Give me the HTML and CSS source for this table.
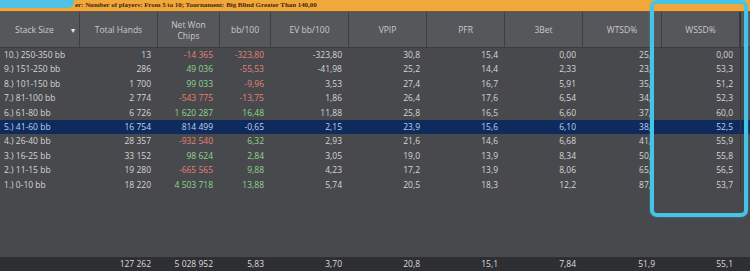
FILE: index.html
```html
<!DOCTYPE html>
<html>
<head>
<meta charset="utf-8">
<link rel="stylesheet" href="styles.css">
</head>
<body>
<div class="app">
  <div class="banner">
    <span class="redact"></span>
    <span class="filter">er: Number of players: From 5 to 10; Tournament: Big Blind Greater Than 140,00</span>
  </div>
  <div class="row head">
    <div class="hc first">Stack Size <span class="arrow">▾</span></div>
    <div class="hc">Total Hands</div>
    <div class="hc">Net Won<br>Chips</div>
    <div class="hc">bb/100</div>
    <div class="hc">EV bb/100</div>
    <div class="hc">VPIP</div>
    <div class="hc">PFR</div>
    <div class="hc">3Bet</div>
    <div class="hc">WTSD%</div>
    <div class="hc">WSSD%</div>
    <div class="hc last"></div>
  </div>
  <div class="body">
    <div class="row data"><div class="c l">10.) 250-350 bb</div><div class="c">13</div><div class="c neg">-14 365</div><div class="c neg">-323,80</div><div class="c">-323,80</div><div class="c">30,8</div><div class="c">15,4</div><div class="c">0,00</div><div class="c wt">25,</div><div class="c">0,00</div><div class="c e"></div></div>
    <div class="row data"><div class="c l">9.) 151-250 bb</div><div class="c">286</div><div class="c pos">49 036</div><div class="c neg">-55,53</div><div class="c">-41,98</div><div class="c">25,2</div><div class="c">14,4</div><div class="c">2,33</div><div class="c wt">23,</div><div class="c">53,3</div><div class="c e"></div></div>
    <div class="row data"><div class="c l">8.) 101-150 bb</div><div class="c">1 700</div><div class="c pos">99 033</div><div class="c neg">-9,96</div><div class="c">3,53</div><div class="c">27,4</div><div class="c">16,7</div><div class="c">5,91</div><div class="c wt">35,</div><div class="c">51,2</div><div class="c e"></div></div>
    <div class="row data"><div class="c l">7.) 81-100 bb</div><div class="c">2 774</div><div class="c neg2">-543 775</div><div class="c neg">-13,75</div><div class="c">1,86</div><div class="c">26,4</div><div class="c">17,6</div><div class="c">6,54</div><div class="c wt">34,</div><div class="c">52,3</div><div class="c e"></div></div>
    <div class="row data"><div class="c l">6.) 61-80 bb</div><div class="c">6 726</div><div class="c pos">1 620 287</div><div class="c pos">16,48</div><div class="c">11,88</div><div class="c">25,8</div><div class="c">16,5</div><div class="c">6,60</div><div class="c wt">37,</div><div class="c">60,0</div><div class="c e"></div></div>
    <div class="row data sel"><div class="c l">5.) 41-60 bb</div><div class="c">16 754</div><div class="c">814 499</div><div class="c">-0,65</div><div class="c">2,15</div><div class="c">23,9</div><div class="c">15,6</div><div class="c">6,10</div><div class="c wt">38,</div><div class="c">52,5</div><div class="c e"></div></div>
    <div class="row data"><div class="c l">4.) 26-40 bb</div><div class="c">28 357</div><div class="c neg">-932 540</div><div class="c pos">6,32</div><div class="c">2,93</div><div class="c">21,6</div><div class="c">14,6</div><div class="c">6,68</div><div class="c wt">41,</div><div class="c">55,9</div><div class="c e"></div></div>
    <div class="row data"><div class="c l">3.) 16-25 bb</div><div class="c">33 152</div><div class="c pos">98 624</div><div class="c pos">2,84</div><div class="c">3,05</div><div class="c">19,0</div><div class="c">13,9</div><div class="c">8,34</div><div class="c wt">50,</div><div class="c">55,8</div><div class="c e"></div></div>
    <div class="row data"><div class="c l">2.) 11-15 bb</div><div class="c">19 280</div><div class="c neg">-665 565</div><div class="c pos">9,88</div><div class="c">4,23</div><div class="c">17,2</div><div class="c">13,9</div><div class="c">8,06</div><div class="c wt">65,</div><div class="c">56,5</div><div class="c e"></div></div>
    <div class="row data"><div class="c l">1.) 0-10 bb</div><div class="c">18 220</div><div class="c pos">4 503 718</div><div class="c pos">13,88</div><div class="c">5,74</div><div class="c">20,5</div><div class="c">18,3</div><div class="c">12,2</div><div class="c wt">87,</div><div class="c">53,7</div><div class="c e"></div></div>
  </div>
  <div class="row foot">
    <div class="c l"></div><div class="c">127 262</div><div class="c">5 028 952</div><div class="c">5,83</div><div class="c">3,70</div><div class="c">20,8</div><div class="c">15,1</div><div class="c">7,84</div><div class="c">51,9</div><div class="c">55,1</div><div class="c e"></div>
  </div>
  <div class="callout"></div>
</div>
</body>
</html>
```

FILE: styles.css
```css
html, body {
  margin: 0;
  padding: 0;
}
body {
  width: 750px;
  height: 271px;
  overflow: hidden;
  background: #47494c;
  font-family: "Open Sans", "Noto Sans", sans-serif;
  font-size: 8.5px;
  color: #d6d6d6;
}
.app {
  position: relative;
  width: 750px;
  height: 271px;
  display: flex;
  flex-direction: column;
}
.banner {
  height: 11px;
  background: #f2a73b;
  display: flex;
  align-items: flex-start;
  border-bottom: 1px solid #6e5a3a;
}
.redact {
  width: 74px;
  height: 8px;
  background: #4fc2e6;
  border-radius: 0 0 6px 0;
  flex: none;
}
.filter {
  font-family: "Liberation Serif", "DejaVu Serif", serif;
  font-weight: bold;
  font-size: 6.9px;
  color: #3b2a12;
  line-height: 10px;
  white-space: nowrap;
  margin-left: 1px;
}
.row {
  display: grid;
  grid-template-columns: 80px 78px 62px 51px 78px 78px 78px 78px 79px 78px 1fr;
}
.head {
  height: 35px;
  background: #55575a;
  border-bottom: 1px solid #3a3c3f;
  color: #c9cacb;
}
.hc {
  display: flex;
  align-items: center;
  justify-content: center;
  text-align: center;
  line-height: 11px;
  border-right: 1px solid #3c3e41;
  position: relative;
}
.hc.first {
  justify-content: flex-start;
  padding-left: 15px;
}
.arrow {
  position: absolute;
  right: 4px;
  top: 12px;
  font-size: 8px;
  color: #e8e8e8;
}
.hc.last {
  border-right: none;
  border-left: 1px solid #2f3133;
}
.body {
  flex: 1;
}
.data {
  height: 14.4px;
}
.c {
  text-align: right;
  padding-right: 7px;
  line-height: 14.4px;
  white-space: nowrap;
  overflow: hidden;
}
.c.l {
  text-align: left;
  padding-left: 4px;
  padding-right: 0;
}
.c.wt {
  padding-right: 11px;
}
.c.e {
  border-left: 1px solid #35373a;
  padding: 0;
}
.pos { color: #8fd58c; }
.neg { color: #e38379; }
.neg2 { color: #e5825f; }
.sel {
  background: #0f2a5c;
  color: #b9d2f2;
}
.foot {
  height: 14px;
  background: #2d2f32;
  color: #dcdcdc;
}
.foot .c {
  line-height: 14px;
}
.foot .c.e {
  border-left: none;
}
.callout {
  position: absolute;
  left: 650px;
  top: 0;
  width: 90px;
  height: 209px;
  border: 4px solid #46c4e8;
  border-radius: 7px;
  box-shadow: 0 0 2px rgba(70, 196, 232, 0.6);
}
```
